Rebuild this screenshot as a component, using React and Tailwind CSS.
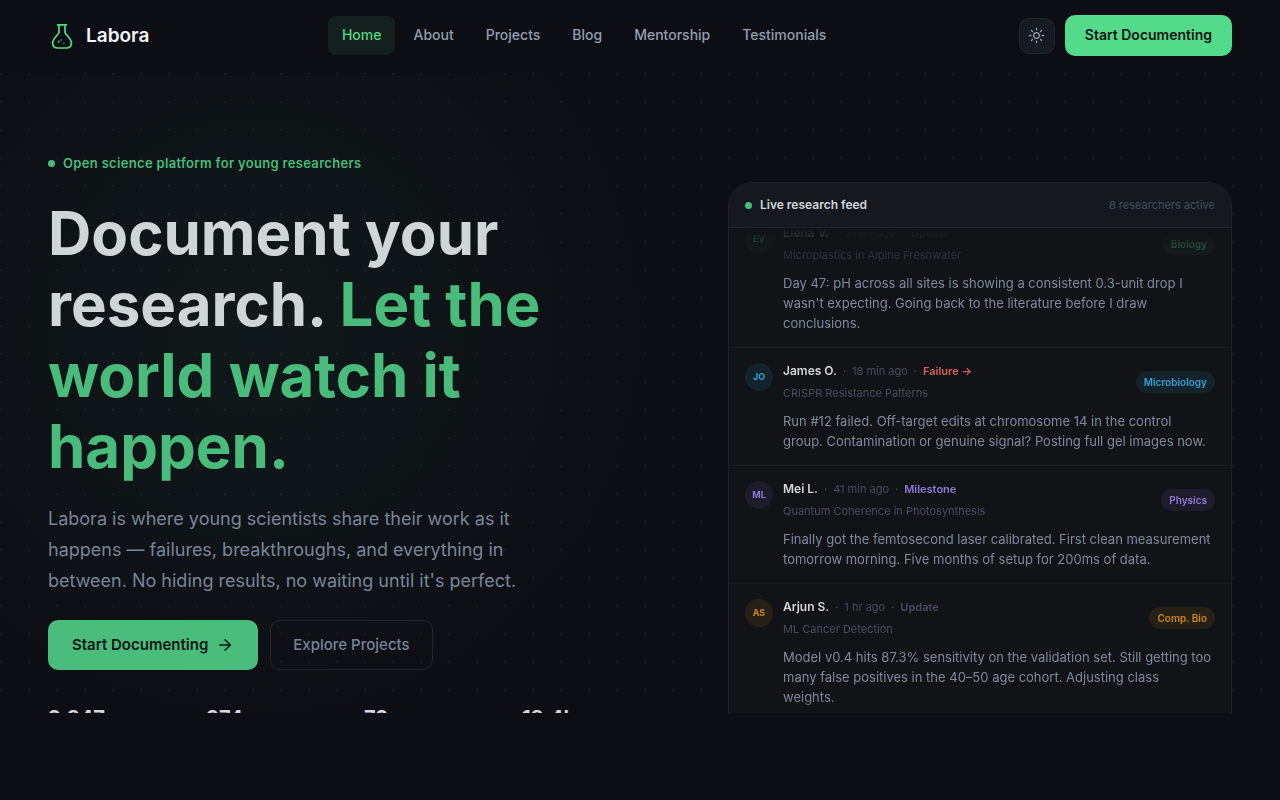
import { ArrowRight, Sun } from 'lucide-react';

const navLinks = ['Home', 'About', 'Projects', 'Blog', 'Mentorship', 'Testimonials'];

const stats = ['2,847', '374', '73', '18.4k'];

const feed = [
  {
    initials: 'EV',
    name: 'Elena V.',
    time: '3 min ago',
    status: 'Update',
    statusColor: 'text-[#454d5f]',
    project: 'Microplastics in Alpine Freshwater',
    field: 'Biology',
    tone: 'text-[#4abd7c] bg-[#15271f]',
    text: "Day 47: pH across all sites is showing a consistent 0.3-unit drop I wasn't expecting. Going back to the literature before I draw conclusions.",
  },
  {
    initials: 'JO',
    name: 'James O.',
    time: '18 min ago',
    status: 'Failure →',
    statusColor: 'text-[#d5605f]',
    project: 'CRISPR Resistance Patterns',
    field: 'Microbiology',
    tone: 'text-[#33a0d2] bg-[#13232c]',
    text: 'Run #12 failed. Off-target edits at chromosome 14 in the control group. Contamination or genuine signal? Posting full gel images now.',
  },
  {
    initials: 'ML',
    name: 'Mei L.',
    time: '41 min ago',
    status: 'Milestone',
    statusColor: 'text-[#9077d8]',
    project: 'Quantum Coherence in Photosynthesis',
    field: 'Physics',
    tone: 'text-[#9077d8] bg-[#1e1c2b]',
    text: 'Finally got the femtosecond laser calibrated. First clean measurement tomorrow morning. Five months of setup for 200ms of data.',
  },
  {
    initials: 'AS',
    name: 'Arjun S.',
    time: '1 hr ago',
    status: 'Update',
    statusColor: 'text-[#454d5f]',
    project: 'ML Cancer Detection',
    field: 'Comp. Bio',
    tone: 'text-[#ce870f] bg-[#272017]',
    text: 'Model v0.4 hits 87.3% sensitivity on the validation set. Still getting too many false positives in the 40–50 age cohort. Adjusting class weights.',
  },
];

const FlaskLogo = () => (
  <svg viewBox="0 0 28 28" className="w-7 h-7" fill="none" stroke="#52d98a" strokeWidth="1.7" strokeLinecap="round" strokeLinejoin="round">
    <path d="M9.5 2.8h9M11 2.8v8L6 17c-2.6 3.6-1.6 9 3.2 9h9.6c4.8 0 5.8-5.4 3.2-9l-5-6.2v-8" />
    <circle cx="10.7" cy="19.7" r="1.2" fill="#52d98a" stroke="none" opacity="0.7" />
    <circle cx="13.2" cy="18" r="0.9" fill="#52d98a" stroke="none" opacity="0.6" />
    <circle cx="15.8" cy="21.2" r="1" fill="#52d98a" stroke="none" opacity="0.5" />
  </svg>
);

const Header = () => (
  <header className="flex items-center justify-between h-[73px] px-12 pb-0.5">
    <a href="#home" className="flex items-center gap-2.5 text-[19px] leading-[31px] font-semibold text-[#f1f4f8]">
      <FlaskLogo />
      Labora
    </a>
    <nav className="flex items-center gap-1">
      {navLinks.map((link, i) => (
        <a
          key={link}
          href={`#${link.toLowerCase()}`}
          className={`px-3.5 pt-2 pb-2.5 rounded-lg text-sm leading-[21px] font-medium ${
            i === 0 ? 'bg-[#14201d] text-[#52d98a]' : 'text-[#949eb2]'
          }`}
        >
          {link}
        </a>
      ))}
    </nav>
    <div className="flex items-center gap-2.5">
      <button
        type="button"
        aria-label="Toggle theme"
        className="flex items-center justify-center w-9 h-9 rounded-[10px] border border-[#22262d] bg-[#161a21] text-[#949eb2]"
      >
        <Sun size={17} strokeWidth={1.8} />
      </button>
      <button type="button" className="px-5 pb-0.5 h-[41px] rounded-[10px] bg-[#54da8b] text-sm font-semibold text-[#0d1513]">
        Start Documenting
      </button>
    </div>
  </header>
);

const FeedItem = ({ item }) => (
  <li className="flex gap-2.5 px-4 pt-[15px] pb-3.5 border-b border-[#1b1d23]">
    <span className={`flex items-center justify-center w-7 h-7 shrink-0 rounded-full text-[9px] font-bold ${item.tone}`}>
      {item.initials}
    </span>
    <div className="flex-1 min-w-0">
      <div className="flex items-center justify-between">
        <div>
          <p className="flex gap-1.5 text-[11px] leading-4 text-[#454d5f]">
            <span className="text-xs leading-4 font-semibold text-[#d3d6da]">{item.name}</span>
            <span>·</span>
            <span>{item.time}</span>
            <span>·</span>
            <span className={`font-semibold ${item.statusColor}`}>{item.status}</span>
          </p>
          <p className="mt-1.5 text-[11px] leading-4 text-[#454d5f]">{item.project}</p>
        </div>
        <span className={`px-2 py-[3px] rounded-full text-[10px] leading-4 font-semibold ${item.tone}`}>{item.field}</span>
      </div>
      <p className="mt-2.5 pr-0.5 text-[13px] leading-5 text-[#7f899b]">{item.text}</p>
    </div>
  </li>
);

const ResearchFeed = () => (
  <div className="rounded-3xl border border-[#1d2026] bg-[#111317] overflow-hidden">
    <div className="flex items-center justify-between h-[45px] px-4 border-b border-[#1f2329] bg-[#15181f]">
      <h2 className="flex items-center gap-2 text-xs font-semibold text-[#d3d6da]">
        <span className="w-[7px] h-[7px] rounded-full bg-[#4abd7c]" />
        Live research feed
      </h2>
      <span className="text-[11px] text-[#454d5f]">8 researchers active</span>
    </div>
    <div className="h-[520px] overflow-hidden [mask-image:linear-gradient(to_bottom,transparent,black_10%,black_90%,transparent)]">
      <ul className="-mt-[18px]">
        {feed.map((item) => (
          <FeedItem key={item.initials} item={item} />
        ))}
      </ul>
    </div>
  </div>
);

const Hero = () => (
  <section className="h-[80vh] overflow-hidden bg-[radial-gradient(circle_at_1px_1px,rgba(255,255,255,0.03)_1px,transparent_1px),radial-gradient(circle_at_20%_40%,rgba(60,200,150,0.06),transparent_400px)] bg-[size:28px_28px,100%_100%]">
    <div className="grid grid-cols-[1.1fr_0.9fr] gap-16 items-start px-12">
      <div className="pt-20">
        <p className="flex items-center gap-2 text-[13px] leading-5 font-semibold tracking-wide text-[#49bc7b]">
          <span className="w-[7px] h-[7px] rounded-full bg-[#4abd7c]" />
          Open science platform for young researchers
        </p>
        <h1 className="mt-[25px] text-[60px] leading-[71px] font-bold text-[#d0d6d8]">
          Document your
          <br />
          research. <span className="text-[#49bc7b]">Let the<br />world watch it<br />happen.</span>
        </h1>
        <p className="mt-[21px] max-w-[480px] text-lg leading-[31px] text-[#77869a]">
          Labora is where young scientists share their work as it happens — failures, breakthroughs, and everything in between. No hiding results, no waiting until it's perfect.
        </p>
        <div className="flex gap-3 mt-6">
          <button type="button" className="flex items-center gap-2 px-6 h-[50px] rounded-[10px] bg-[#4abd7c] text-[15px] font-semibold text-[#0d1614]">
            Start Documenting
            <ArrowRight size={18} />
          </button>
          <button type="button" className="px-[22px] h-[50px] rounded-[10px] border border-[#22252b] text-[15px] font-medium text-[#77839a]">
            Explore Projects
          </button>
        </div>
        <ul className="grid grid-cols-4 gap-4 mt-[34px]">
          {stats.map((stat) => (
            <li key={stat} className="text-xl leading-7 font-bold text-[#d3d6da]">{stat}</li>
          ))}
        </ul>
      </div>
      <div className="pt-[109px]">
        <ResearchFeed />
      </div>
    </div>
  </section>
);

export default function App() {
  return (
    <div className="min-h-screen bg-[#0d0e13] font-[Inter,sans-serif]">
      <Header />
      <Hero />
    </div>
  );
}
